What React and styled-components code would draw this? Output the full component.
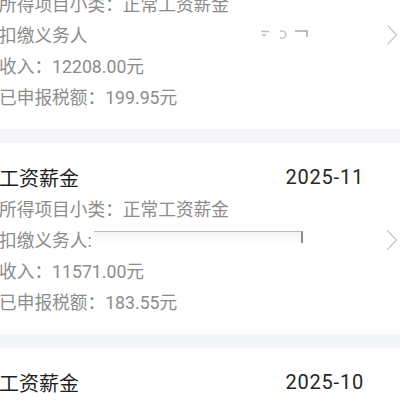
import styled, { createGlobalStyle } from "styled-components";

const GlobalStyle = createGlobalStyle`
    html, body {
        margin: 0;
        padding: 0;
        background: #f4f5f9;
        overflow: hidden;
    }
    body {
        font-family: Roboto, "Noto Sans CJK SC", sans-serif;
    }
`

const records = [
    { title: "工资薪金", month: "2025-12", sub: "正常工资薪金", agent: "blur", income: "12208.00", tax: "199.95" },
    { title: "工资薪金", month: "2025-11", sub: "正常工资薪金", agent: "line", income: "11571.00", tax: "183.55" },
    { title: "工资薪金", month: "2025-10", sub: "正常工资薪金", agent: "line", income: "10980.00", tax: "165.20" },
]

const RedactBlur = () => (
    <BlurMark>
        <svg width="60" height="14" viewBox="0 0 60 14">
            <path d="M12 4.5h8M13 8h4" stroke="#bdbdbd" strokeWidth="1.4" fill="none" />
            <path d="M31 4.5c3-1.5 6 0 6 3s-3 4.5-6 3" stroke="#c4c4c4" strokeWidth="1.4" fill="none" />
            <path d="M46 4h12v6" stroke="#a8a8a8" strokeWidth="1.5" fill="none" />
        </svg>
    </BlurMark>
)

const Chevron = () => (
    <svg width="12" height="22" viewBox="0 0 12 22">
        <path d="M1.5 1.5L10.5 11L1.5 20.5" stroke="#cacaca" strokeWidth="1.4" fill="none" />
    </svg>
)

const RecordCard = ({ record, first }) => (
    <Card $first={first}>
        <CardBody>
            <Header>
                <Title>{record.title}</Title>
                <Month>{record.month}</Month>
            </Header>
            <Row>所得项目小类：{record.sub}</Row>
            <Row>
                {record.agent === "line" ? "扣缴义务人:" : "扣缴义务人"}
                {record.agent === "line" ? <LineMark /> : <RedactBlur />}
            </Row>
            <Row>收入：{record.income}元</Row>
            <Row>已申报税额：{record.tax}元</Row>
        </CardBody>
        <Arrow>
            <Chevron />
        </Arrow>
    </Card>
)

export default function App() {
    return (
        <>
            <GlobalStyle />
            <List>
                {records.map((r, i) => (
                    <RecordCard key={r.month} record={r} first={i === 0} />
                ))}
            </List>
        </>
    )
}

const List = styled.div`
    display: flex;
    flex-direction: column;
    gap: 14px;
`

const Card = styled.div`
    display: flex;
    align-items: center;
    background: #ffffff;
    margin-top: ${(p) => (p.$first ? "-62px" : "0")};
    padding: 19px 2px 18px 0;
`

const CardBody = styled.div`
    flex: 1;
    display: flex;
    flex-direction: column;
    margin-left: -1px;
`

const Header = styled.div`
    display: flex;
    justify-content: space-between;
    align-items: center;
    height: 30px;
    padding-right: 22px;
`

const Title = styled.span`
    font-size: 20px;
    color: #1f1f1f;
`

const Month = styled.span`
    font-size: 20px;
    color: #262626;
    letter-spacing: 0.8px;
`

const Row = styled.div`
    display: flex;
    align-items: center;
    height: 31px;
    font-size: 17.7px;
    color: #8c8c8c;
    white-space: nowrap;
`

const LineMark = styled.span`
    display: inline-block;
    align-self: flex-start;
    width: 207px;
    height: 11px;
    margin-left: 2px;
    margin-top: 8px;
    border-top: 1.5px solid #bdbdbd;
    border-right: 2px solid #8e8e8e;
    background: linear-gradient(#f4f4f4, #ffffff);
`

const BlurMark = styled.span`
    display: inline-flex;
    justify-content: flex-end;
    width: 218px;
    height: 14px;
    margin-left: 4px;
`

const Arrow = styled.div`
    display: flex;
    align-items: center;
    width: 12px;
    padding-top: 2px;
`
